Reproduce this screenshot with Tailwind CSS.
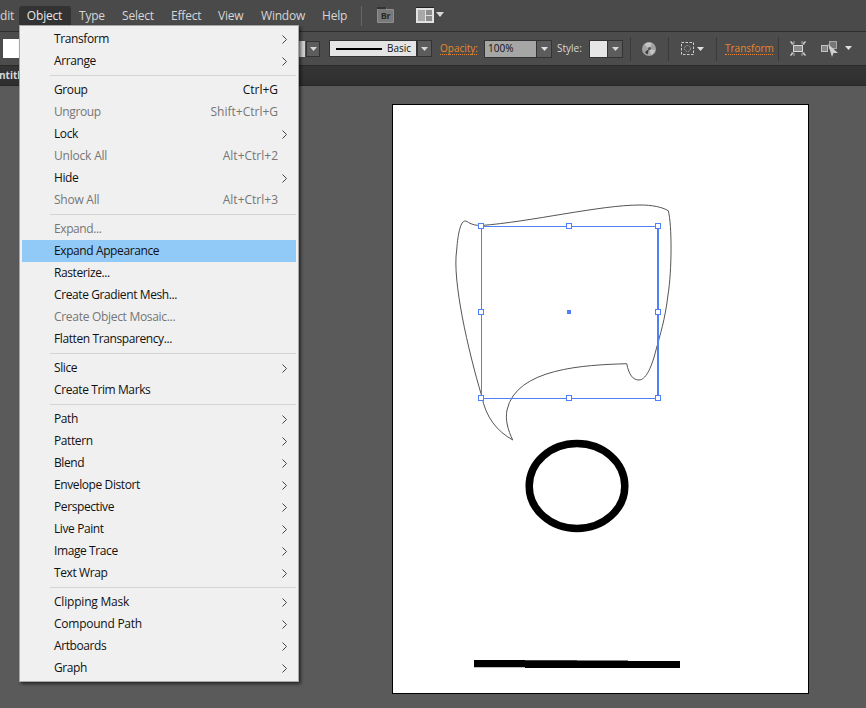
<!doctype html>
<html lang="en">
<head>
<meta charset="utf-8">
<title>Illustrator Object menu</title>
<script src="https://cdn.jsdelivr.net/npm/@tailwindcss/browser@4"></script>
</head>
<body class="m-0 overflow-hidden bg-[#5a5a5a] font-['Open_Sans','Noto_Sans',sans-serif]">
<div class="relative w-[866px] h-[708px] overflow-hidden bg-[#5a5a5a]">

  <!-- Application menu bar -->
  <div class="h-[32px] bg-[#4a4a4a] border-b border-[#2e2e2e] flex items-center text-[12px] tracking-[-0.2px] text-[#d6d6d6] overflow-hidden">
    <span class="w-[19px]">dit</span>
    <span class="w-[52px] h-[19px] self-start mt-[6px] bg-[#333333] rounded-t-[3px] flex items-center justify-center pr-[1px] text-[#e6e6e6]">Object</span>
    <span class="ml-[8px] w-[43px]">Type</span>
    <span class="w-[49px]">Select</span>
    <span class="w-[47px]">Effect</span>
    <span class="w-[43px]">View</span>
    <span class="w-[61px]">Window</span>
    <span class="w-[39px]">Help</span>
    <span class="w-px h-[20px] bg-[#666666]"></span>
    <svg class="ml-[15px] -mt-[2px]" width="17" height="16" viewBox="0 0 17 16" aria-hidden="true">
      <path d="M0.500 15.500V0.500H9V2.500H16.500V15.500Z" fill="#7a7a7a" stroke="#8e8e8e"/>
      <path d="M0 0H9V2H0Z" fill="#333333"/>
      <text x="8.500" y="12" text-anchor="middle" font-size="9" font-weight="700" fill="#2a2a2a" font-family="Open Sans, sans-serif">Br</text>
    </svg>
    <svg class="ml-[22px] -mt-[1px]" width="28" height="16" viewBox="0 0 28 16" aria-hidden="true">
      <path d="M0 0.500H18" stroke="#222222"/>
      <rect x="0.500" y="1.500" width="17" height="14" fill="#e0e0e0" stroke="#e4e4e4"/>
      <rect x="2" y="3" width="7" height="11" fill="#a8a8a8"/>
      <rect x="10" y="3" width="6" height="5" fill="#8c8c8c"/>
      <rect x="10" y="9" width="6" height="5" fill="#8c8c8c"/>
      <path d="M20 5h8l-4 5z" fill="#d8d8d8"/>
    </svg>
  </div>

  <!-- Control bar -->
  <div class="h-[34px] bg-[#4c4c4c] border-b border-[#2a2a2a] flex items-center text-[10px] overflow-hidden">
    <span class="ml-[3px] w-[296px] h-[19px] bg-white"></span>
    <span class="w-[6px] h-[16px] bg-[#d0d0d0]"></span>
    <span class="ml-[1px] w-[14px] h-[16px] bg-[#5c5c5c] border border-[#333333] flex items-center justify-center">
      <svg width="7" height="4" viewBox="0 0 7 4" aria-hidden="true"><path d="M0 0h7L3.500 4z" fill="#d8d8d8"/></svg>
    </span>
    <span class="ml-[9px] w-[88px] h-[17px] bg-[#e4e4e4] border border-[#333333] flex items-center pl-[6px] gap-[5px] text-[#111111] text-[10px]">
      <span class="w-[46px] h-[2px] bg-black"></span>Basic
    </span>
    <span class="w-[15px] h-[17px] bg-[#5c5c5c] border border-[#333333] flex items-center justify-center">
      <svg width="7" height="4" viewBox="0 0 7 4" aria-hidden="true"><path d="M0 0h7L3.500 4z" fill="#d8d8d8"/></svg>
    </span>
    <span class="ml-[8px] w-[37px] text-[#e8862d] border-b border-dotted border-[#e8862d] leading-[12px]">Opacity:</span>
    <span class="ml-[7px] w-[53px] h-[18px] bg-[#a6a6a6] border border-[#333333] flex items-center pl-[3px] text-[#111111]">100%</span>
    <span class="w-[15px] h-[18px] bg-[#5c5c5c] border border-[#333333] border-l-0 flex items-center justify-center">
      <svg width="7" height="4" viewBox="0 0 7 4" aria-hidden="true"><path d="M0 0h7L3.500 4z" fill="#e0e0e0"/></svg>
    </span>
    <span class="ml-[5px] w-[32px] text-[#d8d8d8]">Style:</span>
    <span class="w-[19px] h-[18px] bg-[#e6e6e6] border border-[#333333]"></span>
    <span class="w-[15px] h-[18px] bg-[#5c5c5c] border border-[#333333] border-l-0 flex items-center justify-center">
      <svg width="7" height="4" viewBox="0 0 7 4" aria-hidden="true"><path d="M0 0h7L3.500 4z" fill="#d8d8d8"/></svg>
    </span>
    <span class="ml-[7px] w-px h-[24px] bg-[#3a3a3a]"></span>
    <svg class="ml-[11px]" width="14" height="14" viewBox="0 0 14 14" aria-hidden="true">
      <circle cx="7" cy="7" r="7" fill="#a2a2a2"/>
      <path d="M7 7 2.500 2.500A6.500 6.500 0 0 1 10 1.500zM7 7l6 1a6.500 6.500 0 0 1-4 5z" fill="#c4c4c4"/>
      <path d="M7 7 5.500 12.500A6 6 0 0 1 3 10z" fill="#3a3a3a"/>
      <circle cx="7.500" cy="6.500" r="1.500" fill="#555555"/>
    </svg>
    <span class="ml-[12px] w-px h-[24px] bg-[#3a3a3a]"></span>
    <svg class="ml-[12px]" width="24" height="14" viewBox="0 0 24 14" aria-hidden="true">
      <rect x="0.500" y="0.500" width="12" height="12" fill="none" stroke="#d0d0d0" stroke-dasharray="2.500 1.500"/>
      <circle cx="6.500" cy="6.500" r="3" fill="none" stroke="#a8a8a8" stroke-dasharray="1.500 1"/>
      <path d="M16 5h7l-3.500 4z" fill="#e0e0e0"/>
    </svg>
    <span class="ml-[11px] w-px h-[24px] bg-[#3a3a3a]"></span>
    <span class="ml-[8px] w-[48px] text-[#e8862d] border-b border-dotted border-[#e8862d] leading-[12px]">Transform</span>
    <span class="ml-[5px] w-px h-[24px] bg-[#3a3a3a]"></span>
    <svg class="ml-[11px]" width="16" height="15" viewBox="0 0 16 15" aria-hidden="true">
      <rect x="3.500" y="4.500" width="9" height="6" fill="#8a8a8a" stroke="#d8d8d8"/>
      <path d="M0.500 0.500l2.500 2.500M15.500 0.500l-2.500 2.500M0.500 14.500l2.500-2.500M15.500 14.500l-2.500-2.500" stroke="#e0e0e0" stroke-width="1.300"/>
      <path d="M1 3h3V0M15 3h-3V0M1 12h3v3M15 12h-3v3" fill="none" stroke="#a8a8a8"/>
    </svg>
    <svg class="ml-[15px]" width="32" height="16" viewBox="0 0 32 16" aria-hidden="true">
      <rect x="0.500" y="4.500" width="6" height="6" fill="#858585" stroke="#c4c4c4"/>
      <rect x="8.500" y="0.500" width="7" height="7" fill="#777777" stroke="#a8a8a8"/>
      <path d="M7 3l10 9-4.500 0-1.500 4z" fill="#d0d0d0"/>
      <path d="M24 5h7l-3.500 4z" fill="#e0e0e0"/>
    </svg>
  </div>

  <!-- Document tab strip -->
  <div class="h-[20px] bg-gradient-to-b from-[#353535] to-[#2f2f2f] border-b border-[#262626] flex items-center text-[10px] font-bold text-[#d8d8d8] overflow-hidden">
    <span class="-ml-[1px]">ntitl</span>
  </div>

  <!-- Artboard with artwork -->
  <div class="absolute left-[392px] top-[104px] w-[417px] h-[590px] bg-white border border-black"></div>
  <svg class="absolute left-0 top-0" width="866" height="708" viewBox="0 0 866 708" aria-hidden="true">
    <path d="M512.700 440C497 431 486 418 481.700 396C468 350 452 280 456.700 250C458 232 461 221 465 221C468 221 470 225.500 481 225.500C530 222 600 205 640 205C652 205 662 207 668.300 210.700C672 225 672 270 668 295C665 320 660 335 656 350C651 370 645 380 639 380C633 380 629 375 626.700 363.700C585 365 516 368 507 410C505 420 508 430 512.700 440Z" fill="none" stroke="#555555" stroke-width="1"/>
    <ellipse cx="577" cy="486" rx="47.800" ry="42.500" fill="none" stroke="#000000" stroke-width="7.500"/>
    <path d="M474 660H525V667.300H474ZM525 660.200H577V668H525ZM577 660.500H628V668H577ZM628 661H680V668H628Z" fill="#000000"/>
    <path d="M481.500 226.500H658M481.500 398.500H658M481.500 226.500V398.500" fill="none" stroke="#4f7fff" stroke-width="1"/>
    <path d="M658 226V398" fill="none" stroke="#4f7fff" stroke-width="2"/>
    <g fill="#ffffff" stroke="#4f7fff" stroke-width="1">
      <rect x="478.500" y="223.500" width="5" height="5"/>
      <rect x="566.500" y="223.500" width="5" height="5"/>
      <rect x="655.500" y="223.500" width="5" height="5"/>
      <rect x="478.500" y="309.500" width="5" height="5"/>
      <rect x="655.500" y="309.500" width="5" height="5"/>
      <rect x="478.500" y="395.500" width="5" height="5"/>
      <rect x="566.500" y="395.500" width="5" height="5"/>
      <rect x="655.500" y="395.500" width="5" height="5"/>
    </g>
    <rect x="567" y="310" width="4" height="4" fill="#4f7fff"/>
  </svg>

  <!-- Object menu -->
  <div class="absolute left-[19px] top-[25px] w-[280px] h-[657px] bg-[#f0f0f0] border border-[#a8a8a8] pt-[2px] px-[2px] shadow-[2px_2px_3px_rgba(0,0,0,0.55)] text-[12px] tracking-[-0.4px] text-[#111111]">
    <div class="h-[22px] flex items-center pl-[32px]"><span>Transform</span><svg class="absolute left-[262px]" width="5" height="9" viewBox="0 0 5 9" aria-hidden="true"><path d="M0.500 0.500 4.500 4.500 0.500 8.500" fill="none" stroke="#444444"/></svg></div>
    <div class="h-[22px] flex items-center pl-[32px]"><span>Arrange</span><svg class="absolute left-[262px]" width="5" height="9" viewBox="0 0 5 9" aria-hidden="true"><path d="M0.500 0.500 4.500 4.500 0.500 8.500" fill="none" stroke="#444444"/></svg></div>
    <div class="h-[7px] ml-[28px] flex items-center"><div class="w-full h-px bg-[#d4d4d4]"></div></div>
    <div class="h-[22px] flex items-center justify-between pl-[32px] pr-[18px]"><span>Group</span><span class="tracking-normal">Ctrl+G</span></div>
    <div class="h-[22px] flex items-center justify-between pl-[32px] pr-[18px] text-[#767676]"><span>Ungroup</span><span class="tracking-normal">Shift+Ctrl+G</span></div>
    <div class="h-[22px] flex items-center pl-[32px]"><span>Lock</span><svg class="absolute left-[262px]" width="5" height="9" viewBox="0 0 5 9" aria-hidden="true"><path d="M0.500 0.500 4.500 4.500 0.500 8.500" fill="none" stroke="#444444"/></svg></div>
    <div class="h-[22px] flex items-center justify-between pl-[32px] pr-[18px] text-[#767676]"><span class="tracking-[-0.2px]">Unlock All</span><span class="tracking-normal">Alt+Ctrl+2</span></div>
    <div class="h-[22px] flex items-center pl-[32px]"><span>Hide</span><svg class="absolute left-[262px]" width="5" height="9" viewBox="0 0 5 9" aria-hidden="true"><path d="M0.500 0.500 4.500 4.500 0.500 8.500" fill="none" stroke="#444444"/></svg></div>
    <div class="h-[22px] flex items-center justify-between pl-[32px] pr-[18px] text-[#767676]"><span class="tracking-[-0.25px]">Show All</span><span class="tracking-normal">Alt+Ctrl+3</span></div>
    <div class="h-[7px] ml-[28px] flex items-center"><div class="w-full h-px bg-[#d4d4d4]"></div></div>
    <div class="h-[22px] flex items-center pl-[32px] text-[#767676]"><span>Expand...</span></div>
    <div class="h-[22px] flex items-center pl-[32px] bg-[#91c9f7]"><span>Expand Appearance</span></div>
    <div class="h-[22px] flex items-center pl-[32px]"><span>Rasterize...</span></div>
    <div class="h-[22px] flex items-center pl-[32px]"><span>Create Gradient Mesh...</span></div>
    <div class="h-[22px] flex items-center pl-[32px] text-[#767676]"><span class="tracking-[-0.3px]">Create Object Mosaic...</span></div>
    <div class="h-[22px] flex items-center pl-[32px]"><span>Flatten Transparency...</span></div>
    <div class="h-[7px] ml-[28px] flex items-center"><div class="w-full h-px bg-[#d4d4d4]"></div></div>
    <div class="h-[22px] flex items-center pl-[32px]"><span>Slice</span><svg class="absolute left-[262px]" width="5" height="9" viewBox="0 0 5 9" aria-hidden="true"><path d="M0.500 0.500 4.500 4.500 0.500 8.500" fill="none" stroke="#444444"/></svg></div>
    <div class="h-[22px] flex items-center pl-[32px]"><span>Create Trim Marks</span></div>
    <div class="h-[7px] ml-[28px] flex items-center"><div class="w-full h-px bg-[#d4d4d4]"></div></div>
    <div class="h-[22px] flex items-center pl-[32px]"><span>Path</span><svg class="absolute left-[262px]" width="5" height="9" viewBox="0 0 5 9" aria-hidden="true"><path d="M0.500 0.500 4.500 4.500 0.500 8.500" fill="none" stroke="#444444"/></svg></div>
    <div class="h-[22px] flex items-center pl-[32px]"><span>Pattern</span><svg class="absolute left-[262px]" width="5" height="9" viewBox="0 0 5 9" aria-hidden="true"><path d="M0.500 0.500 4.500 4.500 0.500 8.500" fill="none" stroke="#444444"/></svg></div>
    <div class="h-[22px] flex items-center pl-[32px]"><span>Blend</span><svg class="absolute left-[262px]" width="5" height="9" viewBox="0 0 5 9" aria-hidden="true"><path d="M0.500 0.500 4.500 4.500 0.500 8.500" fill="none" stroke="#444444"/></svg></div>
    <div class="h-[22px] flex items-center pl-[32px]"><span>Envelope Distort</span><svg class="absolute left-[262px]" width="5" height="9" viewBox="0 0 5 9" aria-hidden="true"><path d="M0.500 0.500 4.500 4.500 0.500 8.500" fill="none" stroke="#444444"/></svg></div>
    <div class="h-[22px] flex items-center pl-[32px]"><span>Perspective</span><svg class="absolute left-[262px]" width="5" height="9" viewBox="0 0 5 9" aria-hidden="true"><path d="M0.500 0.500 4.500 4.500 0.500 8.500" fill="none" stroke="#444444"/></svg></div>
    <div class="h-[22px] flex items-center pl-[32px]"><span>Live Paint</span><svg class="absolute left-[262px]" width="5" height="9" viewBox="0 0 5 9" aria-hidden="true"><path d="M0.500 0.500 4.500 4.500 0.500 8.500" fill="none" stroke="#444444"/></svg></div>
    <div class="h-[22px] flex items-center pl-[32px]"><span>Image Trace</span><svg class="absolute left-[262px]" width="5" height="9" viewBox="0 0 5 9" aria-hidden="true"><path d="M0.500 0.500 4.500 4.500 0.500 8.500" fill="none" stroke="#444444"/></svg></div>
    <div class="h-[22px] flex items-center pl-[32px]"><span>Text Wrap</span><svg class="absolute left-[262px]" width="5" height="9" viewBox="0 0 5 9" aria-hidden="true"><path d="M0.500 0.500 4.500 4.500 0.500 8.500" fill="none" stroke="#444444"/></svg></div>
    <div class="h-[7px] ml-[28px] flex items-center"><div class="w-full h-px bg-[#d4d4d4]"></div></div>
    <div class="h-[22px] flex items-center pl-[32px]"><span class="tracking-[-0.2px]">Clipping Mask</span><svg class="absolute left-[262px]" width="5" height="9" viewBox="0 0 5 9" aria-hidden="true"><path d="M0.500 0.500 4.500 4.500 0.500 8.500" fill="none" stroke="#444444"/></svg></div>
    <div class="h-[22px] flex items-center pl-[32px]"><span class="tracking-[-0.25px]">Compound Path</span><svg class="absolute left-[262px]" width="5" height="9" viewBox="0 0 5 9" aria-hidden="true"><path d="M0.500 0.500 4.500 4.500 0.500 8.500" fill="none" stroke="#444444"/></svg></div>
    <div class="h-[22px] flex items-center pl-[32px]"><span>Artboards</span><svg class="absolute left-[262px]" width="5" height="9" viewBox="0 0 5 9" aria-hidden="true"><path d="M0.500 0.500 4.500 4.500 0.500 8.500" fill="none" stroke="#444444"/></svg></div>
    <div class="h-[22px] flex items-center pl-[32px]"><span>Graph</span><svg class="absolute left-[262px]" width="5" height="9" viewBox="0 0 5 9" aria-hidden="true"><path d="M0.500 0.500 4.500 4.500 0.500 8.500" fill="none" stroke="#444444"/></svg></div>
  </div>
</div>
</body>
</html>
